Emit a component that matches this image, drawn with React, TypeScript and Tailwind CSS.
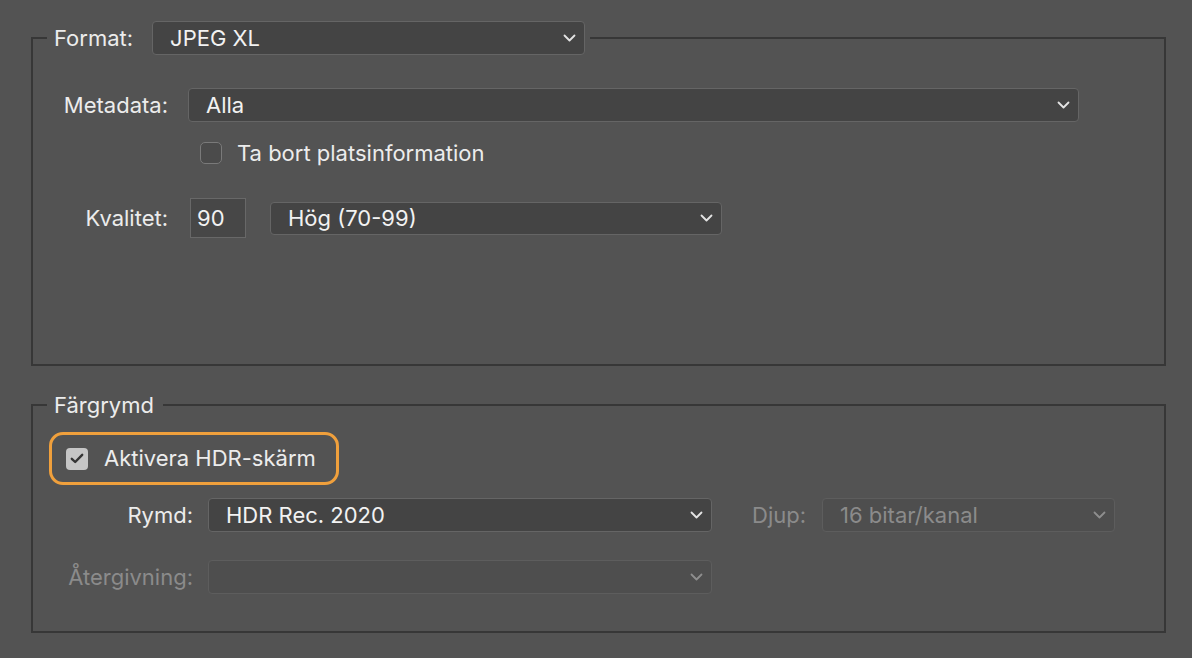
import React from "react";

function Chevron({ dim = false }: { dim?: boolean }) {
  return (
    <svg width="13" height="8" viewBox="0 0 13 8" fill="none" className="shrink-0">
      <path
        d="M1.5 1.5 L6.5 6.5 L11.5 1.5"
        stroke={dim ? "#8e8e8e" : "#e4e4e4"}
        strokeWidth="1.8"
        strokeLinecap="round"
        strokeLinejoin="round"
      />
    </svg>
  );
}

function Select({
  value,
  className,
  dim = false,
}: {
  value: string;
  className: string;
  dim?: boolean;
}) {
  return (
    <div
      className={
        "flex items-center justify-between rounded-[4px] border pl-[17px] pr-[8px] " +
        (dim
          ? "border-[#5d5d5d] bg-[#4e4e4e] text-[#8b8b8b] "
          : "border-[#656565] bg-[#444444] text-[#f2f2f2] ") +
        className
      }
    >
      <span className="leading-none">{value}</span>
      <Chevron dim={dim} />
    </div>
  );
}

export default function App() {
  return (
    <div
      className="h-[658px] w-[1192px] overflow-hidden bg-[#535353] pl-[31px] pt-[21px] text-[22px] text-[#ececec]"
      style={{ fontFamily: "Inter, 'Noto Sans', sans-serif" }}
    >
      <fieldset className="m-0 h-[345px] w-[1135px] border-2 border-[#373737] p-0 pt-[33px]">
        <legend className="ml-[14px] pl-[7px] pr-[5px]">
          <div className="flex items-center gap-[19px]">
            <span>Format:</span>
            <Select value="JPEG XL" className="h-[34px] w-[433px]" />
          </div>
        </legend>

        <div className="flex h-[34px] items-center">
          <div className="w-[135px] text-right">Metadata:</div>
          <Select value="Alla" className="ml-[20px] h-[34px] w-[891px]" />
        </div>

        <div className="mt-[20px] flex h-[22px] items-center pl-[167px]">
          <div className="h-[22px] w-[22px] rounded-[5px] border-[1.5px] border-[#7a7a7a] bg-[#4b4b4b]" />
          <span className="ml-[15px]">Ta bort platsinformation</span>
        </div>

        <div className="mt-[34px] flex h-[40px] items-center">
          <div className="w-[135px] text-right">Kvalitet:</div>
          <div className="ml-[22px] flex h-[40px] w-[56px] items-center border-[1.5px] border-[#686868] bg-[#474747] pl-[6px] text-[#f2f2f2]">
            90
          </div>
          <Select value="Hög (70-99)" className="ml-[24px] h-[33px] w-[452px]" />
        </div>
      </fieldset>

      <fieldset className="m-0 mt-[27px] h-[240px] w-[1135px] border-2 border-[#373737] p-0 pt-[15px]">
        <legend className="ml-[14px] pl-[7px] pr-[9px] leading-[24px]">Färgrymd</legend>

        <div className="ml-[16px] flex h-[53px] w-[290px] items-center rounded-[14px] border-[3px] border-[#f0a03c] pl-[14px]">
          <div className="flex h-[22px] w-[22px] items-center justify-center rounded-[4px] bg-[#c6c6c6]">
            <svg width="14" height="11" viewBox="0 0 14 11" fill="none">
              <path
                d="M1.8 5.8 L5.2 9 L12.2 1.8"
                stroke="#353535"
                strokeWidth="2.4"
                strokeLinecap="round"
                strokeLinejoin="round"
              />
            </svg>
          </div>
          <span className="ml-[16px]">Aktivera HDR-skärm</span>
        </div>

        <div className="mt-[13px] flex h-[34px] items-center">
          <div className="w-[160px] text-right">Rymd:</div>
          <Select value="HDR Rec. 2020" className="ml-[15px] h-[34px] w-[504px]" />
          <div className="ml-[40px] text-[#8b8b8b]">Djup:</div>
          <Select value="16 bitar/kanal" dim className="ml-[16px] h-[34px] w-[293px]" />
        </div>

        <div className="mt-[28px] flex h-[34px] items-center">
          <div className="w-[160px] text-right text-[#8b8b8b]">Återgivning:</div>
          <Select value="" dim className="ml-[15px] h-[34px] w-[504px]" />
        </div>
      </fieldset>
    </div>
  );
}
